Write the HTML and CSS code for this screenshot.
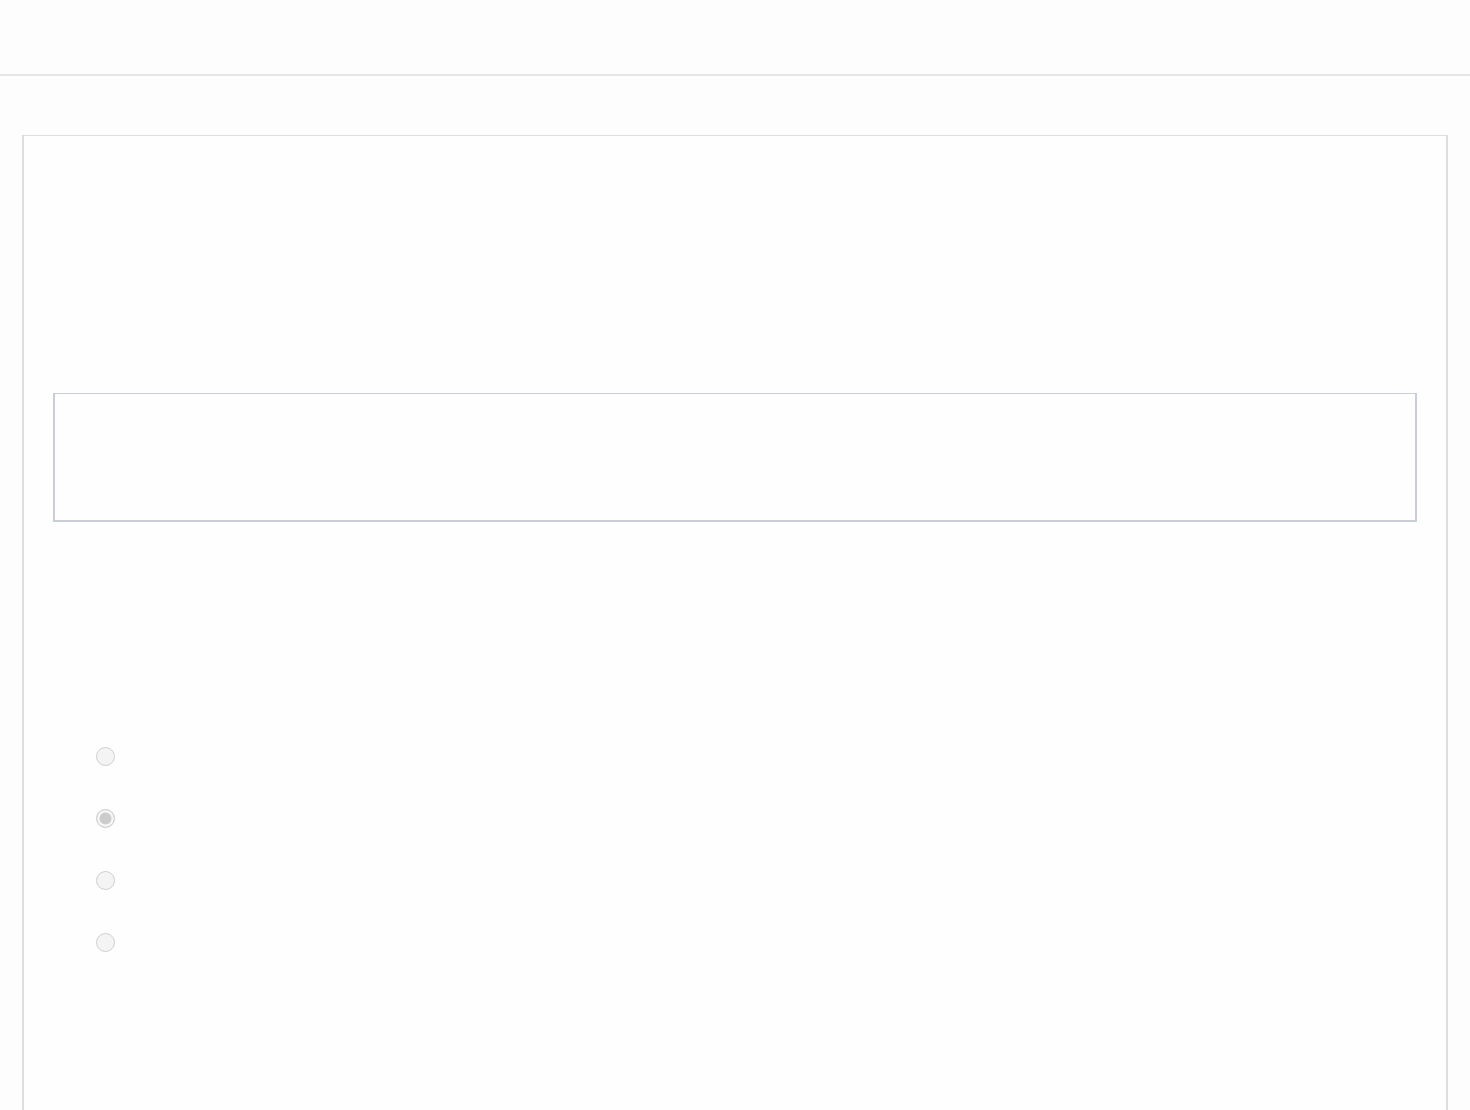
FILE: index.html
```html
<!DOCTYPE html>
<html lang="en">
<head>
<meta charset="utf-8">
<title>Form</title>
<link rel="stylesheet" href="styles.css">
</head>
<body>
<header class="topbar"></header>
<main class="page">
  <section class="card">
    <div class="card-head"></div>
    <div class="field-box"></div>
    <div class="spacer"></div>
    <div class="options">
      <label class="option"><input type="radio" name="opt" disabled></label>
      <label class="option"><input type="radio" name="opt" checked disabled></label>
      <label class="option"><input type="radio" name="opt" disabled></label>
      <label class="option"><input type="radio" name="opt" disabled></label>
    </div>
  </section>
</main>
</body>
</html>
```

FILE: styles.css
```css
* { box-sizing: border-box; }
html, body {
  margin: 0;
  padding: 0;
  background: #fdfdfd;
  font-family: "Liberation Sans", Arial, sans-serif;
  overflow: hidden;
}
.topbar {
  height: 76px;
  border-bottom: 2px solid #e6e4e6;
  background: #fdfdfd;
}
.page {
  padding: 59px 22px 0;
}
.card {
  border-top: 1px solid #dedede;
  border-left: 2px solid #dedede;
  border-right: 2px solid #dedede;
  padding: 0 29px;
  min-height: 1100px;
  background: #fefefe;
}
.card-head {
  height: 257px;
}
.field-box {
  height: 129px;
  border: 1px solid #c9cdd8;
  border-bottom-width: 2px;
  border-right-width: 2px;
  border-left-width: 2px;
  background: #fefefe;
}
.spacer {
  height: 225px;
}
.options {
  display: flex;
  flex-direction: column;
  gap: 43px;
  padding-left: 43px;
}
.option {
  display: flex;
  align-items: center;
  height: 19px;
}
.option input {
  appearance: none;
  -webkit-appearance: none;
  margin: 0;
  width: 19px;
  height: 19px;
  border-radius: 50%;
  border: 1.5px solid #cfcfcf;
  background: #f4f4f4;
}
.option input:checked {
  background: #cccccc;
  box-shadow: inset 0 0 0 2.5px #f6f6f6;
}
```
